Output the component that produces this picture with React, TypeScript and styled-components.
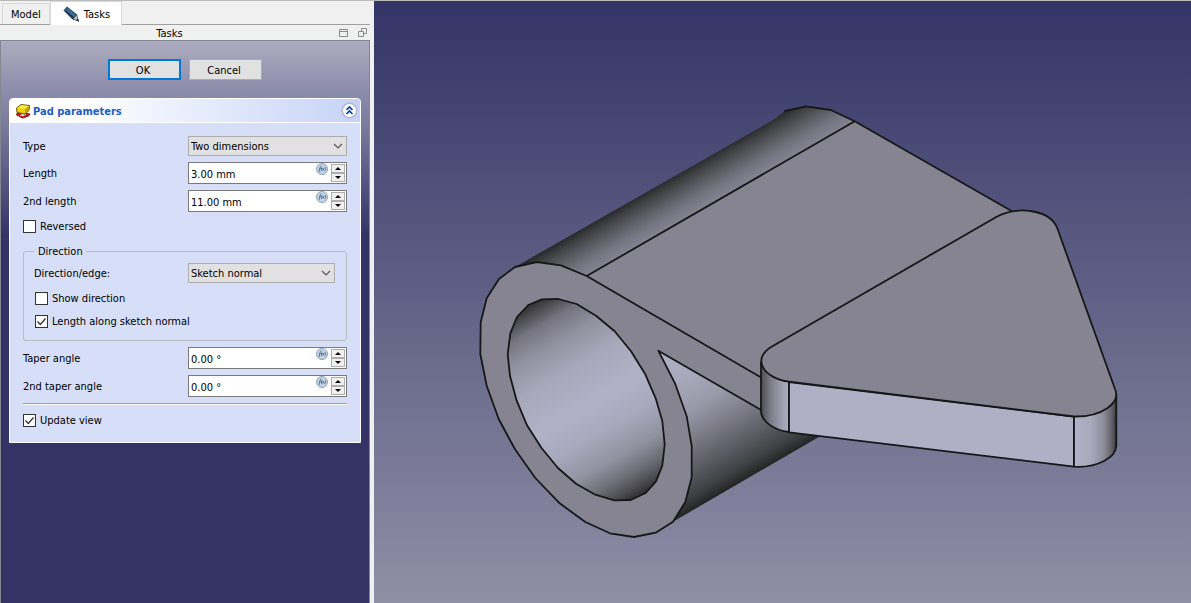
import React, { useId, useState } from 'react';
import styled, { createGlobalStyle } from 'styled-components';

const GlobalStyle = createGlobalStyle`
  * { box-sizing: border-box; }
  body { margin: 0; background: #f0f0f0; }
  body, button, input, select {
    font-family: "DejaVu Sans Condensed", Tahoma, "DejaVu Sans", sans-serif;
    font-size: 11px;
    line-height: 14px;
    color: #000;
  }
`;

const Window = styled.div`
  display: flex;
  min-height: 100vh;
  border-top: 1px solid #bababa;
`;

const Dock = styled.aside`
  display: flex;
  flex-direction: column;
  flex: none;
  width: 370px;
  margin-right: 4px;
`;

const TabBar = styled.div`
  display: flex;
  align-items: flex-end;
  height: 24px;
  padding-left: 2px;
  border-bottom: 1px solid #a0a0a0;
`;

const Tab = styled.button<{ $active?: boolean }>`
  display: flex;
  align-items: center;
  gap: 4px;
  height: ${(p) => (p.$active ? 24 : 21)}px;
  margin-bottom: ${(p) => (p.$active ? -1 : 0)}px;
  padding: ${(p) => (p.$active ? '2px 11px 0 12px' : '2px 8px 0')};
  border: 1px solid #d9d9d9;
  border-bottom: 0;
  background: ${(p) => (p.$active ? '#fff' : '#f0f0f0')};
`;

const TitleBar = styled.header`
  display: flex;
  align-items: center;
  height: 15px;
  padding-right: 3px;
`;

const Title = styled.h1`
  flex: 1;
  margin: 0;
  padding-top: 2px;
  font-size: 11px;
  font-weight: 400;
  text-align: center;
`;

const TitleTools = styled.div`
  display: flex;
  gap: 10px;
`;

const TitleButton = styled.button`
  display: flex;
  padding: 0;
  border: 0;
  background: none;
`;

const TaskArea = styled.main`
  flex: 1;
  padding: 18px 8px;
  border: 1px solid #828790;
  border-bottom: 0;
  background: linear-gradient(#acacc0 0, #8c8cab 50px, #7a7a9e 85px, #333366 195px);
`;

const DialogButtons = styled.div`
  display: flex;
  justify-content: center;
  gap: 8px;
  margin-bottom: 18px;
`;

const DialogButton = styled.button<{ $primary?: boolean }>`
  width: 73px;
  height: 21px;
  padding: 2px 3px 0 0;
  border: ${(p) => (p.$primary ? '2px solid #0078d7' : '1px solid #adadad')};
  background: #e1e1e1;
`;

const Panel = styled.section`
  border-radius: 4px 4px 0 0;
  overflow: hidden;
  background: #d6dff7;
  border: 1px solid #fff;
`;

const PanelHeader = styled.header`
  display: flex;
  align-items: center;
  gap: 2px;
  height: 24px;
  padding: 0 2px 0 5px;
  border-bottom: 1px solid #fff;
  background: linear-gradient(to right, #fff 20%, #c6d3f7);
`;

const PanelTitle = styled.h2`
  flex: 1;
  margin: 0;
  padding-top: 2px;
  font-size: 11px;
  font-weight: 700;
  line-height: 14px;
  color: #215dc6;
`;

const CollapseButton = styled.button`
  display: flex;
  padding: 0;
  border: 0;
  background: none;
`;

const Form = styled.form`
  display: flex;
  flex-direction: column;
  gap: 6px;
  padding: 13px 13px 14px;
`;

const Row = styled.div`
  display: grid;
  grid-template-columns: 165px 1fr;
  align-items: center;
  > label { padding-top: 2px; }
`;

const GroupRow = styled(Row)`
  grid-template-columns: 154px 1fr;
  margin-bottom: 7px;
`;

const SelectBox = styled.div`
  display: grid;
  align-items: center;
  > * { grid-area: 1 / 1; }
  > svg { justify-self: end; margin-right: 4px; pointer-events: none; }
`;

const NativeSelect = styled.select`
  appearance: none;
  width: 100%;
  height: 20px;
  padding: 2px 20px 0 2px;
  border: 1px solid #adadad;
  border-radius: 0;
  background: #e1e1e1;
`;

const SpinBox = styled.div`
  display: flex;
  height: 22px;
  padding: 0 1px;
  border: 1px solid #7a7a7a;
  background: #fff;
`;

const SpinInput = styled.input`
  flex: 1;
  min-width: 0;
  padding: 3px 0 0 1px;
  border: 0;
  outline: 0;
  background: none;
`;

const FormulaButton = styled.button`
  display: flex;
  align-items: flex-start;
  padding: 0;
  margin-right: 3px;
  border: 0;
  background: none;
`;

const Steppers = styled.div`
  display: flex;
  flex-direction: column;
  width: 14px;
  padding: 1px 0;
`;

const Stepper = styled.button`
  display: flex;
  flex: 1;
  align-items: center;
  justify-content: center;
  padding: 0;
  border: 1px solid #adadad;
  background: #f0f0f0;
`;

const CheckLabel = styled.label`
  display: flex;
  align-items: center;
  gap: 4px;
  height: 16px;
`;

const CheckText = styled.span`
  padding-top: 2px;
`;

const CheckBox = styled.span`
  display: grid;
  > * { grid-area: 1 / 1; }
  > svg { pointer-events: none; visibility: hidden; }
  > input:checked + svg { visibility: visible; }
`;

const NativeCheck = styled.input`
  appearance: none;
  width: 13px;
  height: 13px;
  margin: 0;
  border: 1px solid #333;
  background: #fff;
`;

const Group = styled.fieldset`
  display: flex;
  flex-direction: column;
  min-width: 0;
  margin: 4px 0 0;
  padding: 4px 11px 11px 10px;
  border: 1px solid #b8bcc4;
  border-radius: 3px;
`;

const Legend = styled.legend`
  padding: 1px 3px 0 4px;
`;

const GroupChecks = styled.div`
  display: flex;
  flex-direction: column;
  gap: 7px;
  padding-left: 1px;
`;

const Rule = styled.hr`
  width: 100%;
  margin: 0;
  border: 0;
  border-top: 1px solid #a0a0a0;
  border-bottom: 1px solid #fff;
`;

const Footer = styled.div`
  padding-top: 1px;
`;

const Viewport = styled.section`
  display: flex;
  flex: 1;
  min-width: 0;
  background: linear-gradient(#343467, #8f8fa6);
`;

const Scene = styled.svg`
  flex: 1;
  min-width: 0;
  width: 100%;
`;

const PencilIcon = () => (
  <svg width="17" height="17" viewBox="0 0 17 17">
    <path d="M.5 4.500 4 .5 14 8.500 16 15.500 9.500 13.500z" fill="#24425f" />
    <path d="M2 4.500 4.500 2 13 9 10.500 12z" fill="#3f6d95" />
    <path d="M3 5 10.500 11.500" stroke="#1b3550" strokeWidth="1.200" />
    <path d="M10.500 13 13.500 9.500 15.500 15z" fill="#b9c2c9" />
    <path d="m13 14.500 2-2 1 3z" fill="#17202b" />
  </svg>
);

const PadIcon = () => (
  <svg width="16" height="16" viewBox="0 0 16 16">
    <path d="m1 11.500 3-2 11 1.500-1.500 2L7.500 15z" fill="#c21f1f" stroke="#7a1010" />
    <path d="m4.500 12.500 3-1.500 4 .5-3.500 1.800z" fill="#ece6f0" />
    <path d="M1.500 5 6 1.500l8.500 1-.5 5-4 3.500-8-1.500z" fill="#edd400" stroke="#6b5d00" />
    <path d="M2.500 5 6.500 2.200l7.200.9L10 6z" fill="#fce94f" />
    <path d="M10 6v4.500l3.500-3 .2-4.300z" fill="#c4a000" />
  </svg>
);

const CollapseIcon = () => (
  <svg width="17" height="17" viewBox="0 0 17 17">
    <circle cx="8.500" cy="8.500" r="7.300" fill="#fff" stroke="#b2b8d6" strokeWidth="1.600" />
    <path d="m5.500 8 3-3 3 3M5.500 12l3-3 3 3" fill="none" stroke="#0c3ea8" strokeWidth="1.700" />
  </svg>
);

const FormulaIcon = () => (
  <svg width="12" height="12" viewBox="0 0 12 12">
    <circle cx="6" cy="6" r="5.500" fill="#c3d3e4" stroke="#8ea3b8" />
    <path d="M3 9 4.200 4c.2-.8.600-1 1.200-1M3.200 5.500h1.600M5.600 4.500 5.400 8M6.500 4.800l1.600 2.700M8.200 4.800 6.300 7.500M9.300 4.300c.5 1.200.3 2.500-.4 3.500" fill="none" stroke="#46709c" strokeWidth=".9" />
  </svg>
);

const Chevron = () => (
  <svg width="10" height="7" viewBox="0 0 10 7">
    <path d="m1 1 4 4 4-4" fill="none" stroke="#555" strokeWidth="1.200" />
  </svg>
);

const Tick = () => (
  <svg width="13" height="13" viewBox="0 0 13 13">
    <path d="m2.500 6.500 2.800 3 5.200-6" fill="none" stroke="#333" strokeWidth="1.300" />
  </svg>
);

const ShadeIcon = () => (
  <svg width="9" height="9" viewBox="0 0 9 9">
    <path d="M.5 1.500h8v7h-8zM.5 3.500h8" fill="none" stroke="#8a8a8a" />
  </svg>
);

const FloatIcon = () => (
  <svg width="9" height="9" viewBox="0 0 9 9">
    <path d="M.5 3.500h5v5h-5zM3.500 3.500v-3h5v5h-3" fill="none" stroke="#8a8a8a" />
  </svg>
);

function Choice({ id, options }: { id: string; options: string[] }) {
  return (
    <SelectBox>
      <NativeSelect id={id} defaultValue={options[0]}>
        {options.map((o) => (
          <option key={o}>{o}</option>
        ))}
      </NativeSelect>
      <Chevron />
    </SelectBox>
  );
}

function Quantity({ label, initial, unit }: { label: string; initial: number; unit: string }) {
  const id = useId();
  const [text, setText] = useState(`${initial.toFixed(2)} ${unit}`);
  const step = (by: number) => setText(`${((parseFloat(text) || 0) + by).toFixed(2)} ${unit}`);
  return (
    <Row>
      <label htmlFor={id}>{label}</label>
      <SpinBox>
        <SpinInput id={id} value={text} onChange={(e) => setText(e.target.value)} />
        <FormulaButton type="button" aria-label={`${label} formula`}>
          <FormulaIcon />
        </FormulaButton>
        <Steppers>
          <Stepper type="button" aria-label={`Increase ${label}`} onClick={() => step(1)}>
            <svg width="6" height="3" viewBox="0 0 6 3"><path d="m0 3 3-3 3 3z" /></svg>
          </Stepper>
          <Stepper type="button" aria-label={`Decrease ${label}`} onClick={() => step(-1)}>
            <svg width="6" height="3" viewBox="0 0 6 3"><path d="m0 0 3 3 3-3z" /></svg>
          </Stepper>
        </Steppers>
      </SpinBox>
    </Row>
  );
}

function Check({ label, checked }: { label: string; checked?: boolean }) {
  return (
    <CheckLabel>
      <CheckBox>
        <NativeCheck type="checkbox" defaultChecked={checked} />
        <Tick />
      </CheckBox>
      <CheckText>{label}</CheckText>
    </CheckLabel>
  );
}

const OUTER =
  'M586.700 276 561 265.300 536.700 262 515 267 499 279 486.700 298.300 480.700 322.300 480.300 354 486.700 385.700 498.700 419 515 449.300 535.300 478 559.700 503.300 585.300 522 610 533.300 634 537 655.700 532.700 673 521.700 685.300 502 691.700 477.300 691.700 446 686.700 416.300 675 383.300 658.300 350.700 762 410.500V378z';
const INNER =
  'M541.700 299.300 558.300 299 576.700 304 596 315.700 614.700 331.300 631 351.300 645.300 374.300 655.700 398.300 662.300 421 664.700 444.300 662.300 465.700 656 481.300 645.700 493 630.700 500 614.300 500.300 595.300 494.700 576 483.700 558 468 541.700 448.300 527 425.300 516.700 400.700 510 376 507.700 354.300 510.300 333.300 517 317 528.300 305z';

function shade(id: string, from: number, to: number, stops: [number, string][]) {
  // The cylinders run along (0.866, -0.5), so they are shaded along (0.5, 0.866).
  return (
    <linearGradient id={id} gradientUnits="userSpaceOnUse" x1={from * 0.5} y1={from * 0.866} x2={to * 0.5} y2={to * 0.866}>
      {stops.map(([n, color]) => (
        <stop key={n} offset={(n - from) / (to - from)} stopColor={color} />
      ))}
    </linearGradient>
  );
}

const Model3D = () => (
  <Scene viewBox="374 1 817 602" role="img" aria-label="Pad preview">
    <defs>
      {shade('outerTop', 489, 533, [[489, '#29292a'], [496, '#3d3e41'], [508, '#5b5b63'], [520, '#747480'], [533, '#868491']])}
      {shade('outerLow', 633, 789, [[633, '#b0b0c7'], [665, '#aaaabe'], [700, '#9a99a9'], [728, '#7b7a85'], [755, '#5a5a62'], [775, '#3f4043'], [789, '#222223']])}
      {shade('bore', 527, 751, [[527, '#2d2d2e'], [536, '#45454a'], [552, '#74737e'], [575, '#92919f'], [605, '#a8a8bb'], [645, '#b1b1c8'], [675, '#a9a9bd'], [705, '#92919f'], [725, '#6e6e78'], [740, '#4a4a4f'], [751, '#28282a']])}
      <linearGradient id="cornerLeft">
        <stop offset="0" stopColor="#4c4c51" />
        <stop offset=".35" stopColor="#7d7c88" />
        <stop offset=".7" stopColor="#9c9bac" />
        <stop offset="1" stopColor="#aeaec3" />
      </linearGradient>
      <linearGradient id="cornerRight">
        <stop offset="0" stopColor="#b1b1c8" />
        <stop offset=".4" stopColor="#a9a9bc" />
        <stop offset=".7" stopColor="#8d8c99" />
        <stop offset=".9" stopColor="#5f5f66" />
        <stop offset="1" stopColor="#37373a" />
      </linearGradient>
    </defs>
    <path d="M515 267 773 120 785 111 806 106.300 830.700 110 854.700 121.300 586.700 276 561 265.300 536.700 262z" fill="url(#outerTop)" />
    <path d="M658.300 350.700 762 410 830 430.500 673 521.700 685.300 502 691.700 477.300 691.700 446 686.700 416.300 675 383.300z" fill="url(#outerLow)" />
    <path d="M586.700 276 854.700 121.300 1012 211 998 230 762 378z" fill="#868491" />
    <g stroke="#161717" strokeWidth="1.800" strokeLinejoin="round" strokeLinecap="round">
      <path d="M785 111 806 106.300 830.700 110 854.700 121.300 1012 211.300M854.700 121.300 586.700 276" fill="none" />
      <path d={OUTER} fill="#868491" />
      <path d={INNER} fill="url(#bore)" />
      <path d="M761 362V411C761 420 772 430 789 432V382z" fill="url(#cornerLeft)" />
      <path d="M789 382 1074 416.500V466.700L789 432.300z" fill="#afafc5" />
      <path d="M1074 416.500V466.700C1098 468 1116 457 1116.300 446V395z" fill="url(#cornerRight)" />
      <path d="M771.500 346.700 996.700 216.700C1017 206 1050 209 1057.300 228.300L1115 389C1121 403 1102 417 1074 416.500L789 381.700C764 378.500 751 359 771.500 346.700z" fill="#868491" />
    </g>
  </Scene>
);

export default function App() {
  return (
    <>
      <GlobalStyle />
      <Window>
        <Dock>
          <TabBar role="tablist">
            <Tab role="tab" aria-selected={false}>Model</Tab>
            <Tab role="tab" aria-selected $active>
              <PencilIcon />
              Tasks
            </Tab>
          </TabBar>
          <TitleBar>
            <Title>Tasks</Title>
            <TitleTools>
              <TitleButton aria-label="Collapse"><ShadeIcon /></TitleButton>
              <TitleButton aria-label="Float"><FloatIcon /></TitleButton>
            </TitleTools>
          </TitleBar>
          <TaskArea>
            <DialogButtons>
              <DialogButton $primary>OK</DialogButton>
              <DialogButton>Cancel</DialogButton>
            </DialogButtons>
            <Panel>
              <PanelHeader>
                <PadIcon />
                <PanelTitle>Pad parameters</PanelTitle>
                <CollapseButton aria-label="Collapse panel"><CollapseIcon /></CollapseButton>
              </PanelHeader>
              <Form>
                <Row>
                  <label htmlFor="type">Type</label>
                  <Choice id="type" options={['Two dimensions', 'Dimension']} />
                </Row>
                <Quantity label="Length" initial={3} unit="mm" />
                <Quantity label="2nd length" initial={11} unit="mm" />
                <Check label="Reversed" />
                <Group>
                  <Legend>Direction</Legend>
                  <GroupRow>
                    <label htmlFor="edge">Direction/edge:</label>
                    <Choice id="edge" options={['Sketch normal', 'Select reference...']} />
                  </GroupRow>
                  <GroupChecks>
                    <Check label="Show direction" />
                    <Check label="Length along sketch normal" checked />
                  </GroupChecks>
                </Group>
                <Quantity label="Taper angle" initial={0} unit="°" />
                <Quantity label="2nd taper angle" initial={0} unit="°" />
                <Rule />
                <Footer>
                  <Check label="Update view" checked />
                </Footer>
              </Form>
            </Panel>
          </TaskArea>
        </Dock>
        <Viewport>
          <Model3D />
        </Viewport>
      </Window>
    </>
  );
}
